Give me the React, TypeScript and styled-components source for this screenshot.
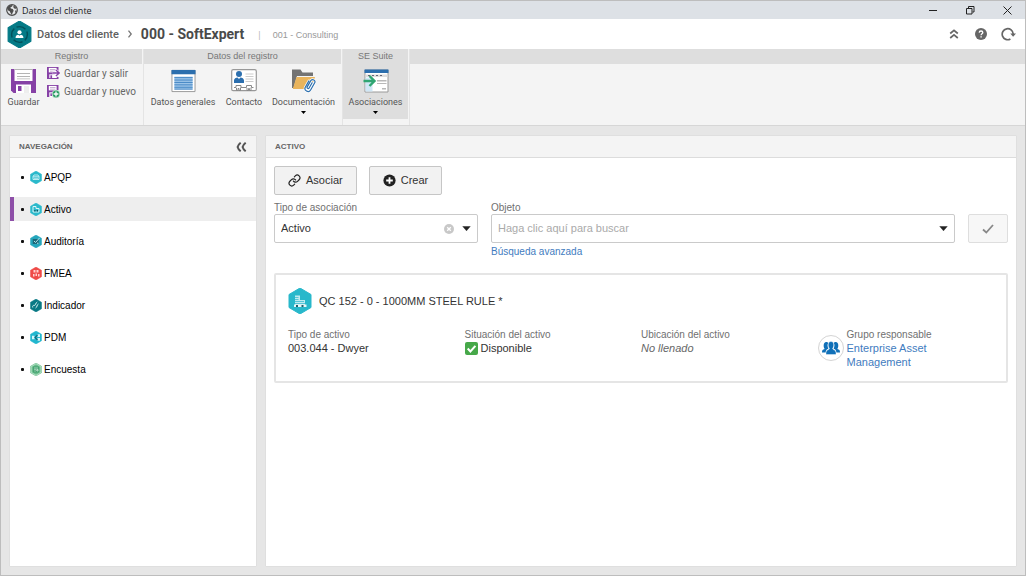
import React from "react";
import styled, { createGlobalStyle, css } from "styled-components";
import { Link } from "lucide-react";

const GlobalStyle = createGlobalStyle`
  *, *::before, *::after { box-sizing: border-box; }
  html, body { margin: 0; }
  body {
    font-family: "Liberation Sans", Arial, sans-serif;
    font-size: 11px;
    line-height: 13px;
    color: #333;
  }
  button, input, select { font: inherit; color: inherit; margin: 0; }
  button { cursor: pointer; }
  svg { display: block; flex: none; }
`;

const Window = styled.div`
  display: flex;
  flex-direction: column;
  min-height: 100vh;
  background: #e6e6e6;
  border: 1px solid #bdbdbd;
`;

const TitleBar = styled.div`
  display: flex;
  align-items: center;
  justify-content: space-between;
  height: 18px;
  padding: 0 8px 0 5px;
  background: #dde1e6;
  font-family: "Open Sans", "Noto Sans", sans-serif;
  font-size: 9px;
  color: #222;
`;

const TitleName = styled.div`
  display: flex;
  align-items: center;
  gap: 4px;
`;

const WindowButtons = styled.div`
  display: flex;
  align-items: center;
  gap: 17px;
`;

const IconButton = styled.button<{ $size?: number }>`
  display: flex;
  align-items: center;
  justify-content: center;
  width: ${(p) => p.$size ?? 20}px;
  height: ${(p) => p.$size ?? 20}px;
  padding: 0;
  border: 0;
  background: none;
  color: #666;
`;

const Header = styled.header`
  display: flex;
  align-items: center;
  justify-content: space-between;
  height: 30px;
  padding: 0 7px 0 6px;
  background: #fff;
`;

const Breadcrumb = styled.nav`
  display: flex;
  align-items: center;
  font-family: Roboto, "Liberation Sans", sans-serif;
`;

const CrumbLink = styled.a`
  margin: 0 8px 0 5px;
  font-weight: 500;
  color: #606060;
  text-decoration: none;
`;

const CrumbTitle = styled.h1`
  margin: 0 14px 0 8px;
  font-size: 14px;
  line-height: 16px;
  font-weight: 700;
  color: #4a4a4a;
`;

const CrumbNote = styled.span`
  padding-top: 3px;
  font-family: "Liberation Sans", Arial, sans-serif;
  font-size: 9px;
  color: #999;
`;

const CrumbBar = styled(CrumbNote)`
  margin-right: 12px;
  color: #bbb;
`;

const HeaderTools = styled.div`
  display: flex;
  align-items: center;
  gap: 7px;
`;

const Ribbon = styled.div`
  display: flex;
  gap: 2px;
  background: #f4f4f4;
  border-bottom: 1px solid #d6d6d6;
`;

const RibbonGroup = styled.section<{ $grow?: boolean }>`
  display: flex;
  flex-direction: column;
  height: 76px;
  ${(p) => p.$grow && "flex: 1;"}
  & + & { box-shadow: -1px 0 0 #e4e4e4; }
`;

const GroupTitle = styled.h2`
  display: flex;
  align-items: center;
  justify-content: center;
  height: 15px;
  margin: 0;
  background: #dedede;
  font-size: 9px;
  font-weight: 400;
  color: #777;
`;

const GroupBody = styled.div`
  display: flex;
  align-items: flex-start;
  font-family: Roboto, "Liberation Sans", sans-serif;
`;

const RibbonStack = styled.div`
  display: flex;
  flex-direction: column;
  width: 96px;
  padding-left: 1px;
`;

const Tool = styled.button<{ $width: number; $active?: boolean }>`
  display: flex;
  flex-direction: column;
  align-items: center;
  width: ${(p) => p.$width}px;
  height: 55px;
  padding: 5px 0 0;
  border: 0;
  background: ${(p) => (p.$active ? "#dedede" : "none")};
  font-size: 9px;
  line-height: 11px;
  white-space: nowrap;
  color: #555;
`;

const ToolLabel = styled.span`
  margin: 4px 0 3px;
`;

const SmallTool = styled.button`
  display: flex;
  align-items: center;
  gap: 4px;
  height: 18px;
  padding: 0;
  border: 0;
  background: none;
  font-size: 10px;
  white-space: nowrap;
  color: #666;
`;

const Workspace = styled.div`
  flex: 1;
  display: flex;
  gap: 8px;
  padding: 9px 8px 8px;
`;

const Panel = styled.section<{ $width?: number }>`
  display: flex;
  flex-direction: column;
  ${(p) => (p.$width ? `flex: none; width: ${p.$width}px;` : "flex: 1; min-width: 0;")}
  background: #fff;
  border: 1px solid #dfdfdf;
  border-radius: 1px;
`;

const PanelHeader = styled.div`
  display: flex;
  align-items: center;
  justify-content: space-between;
  height: 22px;
  padding: 0 5px 0 9px;
  background: #f4f4f4;
  border-bottom: 1px solid #dcdcdc;
`;

const PanelTitle = styled.h2`
  margin: 0;
  font-size: 8px;
  font-weight: 700;
  color: #666;
`;

const NavList = styled.ul`
  display: flex;
  flex-direction: column;
  gap: 8px;
  margin: 0;
  padding: 7px 0;
  list-style: none;
`;

const NavLink = styled.a<{ $active?: boolean }>`
  display: flex;
  align-items: center;
  gap: 2px;
  height: 24px;
  border-left: 4px solid ${(p) => (p.$active ? "#8e4fa8" : "transparent")};
  background: ${(p) => (p.$active ? "#eeeeee" : "none")};
  font-size: 10px;
  color: #000;
  text-decoration: none;
  &::before {
    content: "";
    width: 3px;
    height: 3px;
    margin: 0 4px 0 7px;
    border-radius: 1px;
    background: #111;
  }
`;

const PanelBody = styled.div`
  padding: 8px;
`;

const ButtonRow = styled.div`
  display: flex;
  gap: 12px;
`;

const Button = styled.button`
  display: flex;
  align-items: center;
  gap: 5px;
  height: 29px;
  padding: 0 13px;
  border: 1px solid #c6c6c6;
  border-radius: 2px;
  background: #f2f2f2;
  color: #333;
`;

const FilterRow = styled.div`
  display: flex;
  align-items: flex-start;
  gap: 13px;
  margin-top: 7px;
`;

const Field = styled.div<{ $width?: number }>`
  display: flex;
  flex-direction: column;
  ${(p) => (p.$width ? `flex: none; width: ${p.$width}px;` : "flex: 1; min-width: 0;")}
`;

const label = css`
  font-size: 10px;
  line-height: 12px;
  color: #707070;
`;

const FieldLabel = styled.label`
  ${label}
`;

const Control = styled.div`
  display: flex;
  align-items: center;
  height: 29px;
  border: 1px solid #cacaca;
  border-radius: 2px;
  background: #fff;
`;

const controlText = css`
  flex: 1;
  min-width: 0;
  height: 100%;
  padding: 0 6px 1px;
  border: 0;
  outline: 0;
  background: none;
  color: #333;
`;

const Select = styled.select`
  ${controlText}
  appearance: none;
`;

const Input = styled.input`
  ${controlText}
  &::placeholder { color: #aaa; opacity: 1; }
`;

const ConfirmButton = styled.button`
  display: flex;
  align-items: center;
  justify-content: center;
  width: 40px;
  height: 29px;
  margin-top: 12px;
  padding: 0;
  border: 1px solid #dedede;
  border-radius: 2px;
  background: #f7f7f7;
`;

const AdvancedLink = styled.a`
  align-self: flex-start;
  margin-top: 2px;
  font-size: 10px;
  color: #3f7cc0;
  text-decoration: none;
`;

const Card = styled.article`
  min-height: 109px;
  margin-top: 15px;
  padding: 13px 12px 12px;
  border: 2px solid #e5e5e5;
  border-radius: 2px;
`;

const CardHead = styled.div`
  display: flex;
  align-items: center;
  gap: 7px;
`;

const CardTitle = styled.h3`
  margin: 0;
  font-size: 11px;
  font-weight: 400;
  color: #333;
`;

const Facts = styled.dl`
  display: grid;
  grid-template-columns: repeat(4, 1fr);
  margin: 15px 0 0;
`;

const Fact = styled.div`
  min-width: 0;
`;

const FactLabel = styled.dt`
  ${label}
`;

const FactValue = styled.dd<{ $empty?: boolean }>`
  display: flex;
  align-items: center;
  gap: 3px;
  margin: 0;
  line-height: 14px;
  ${(p) => p.$empty && "font-style: italic; color: #666;"}
  a { color: #3f7cc0; text-decoration: none; }
`;

const GroupFact = styled.div`
  display: flex;
  gap: 3px;
`;

const Avatar = styled.span`
  display: flex;
  align-items: center;
  justify-content: center;
  flex: none;
  width: 26px;
  height: 26px;
  margin-top: 6px;
  border: 1px solid #d4d4d4;
  border-radius: 50%;
`;

const HEX = "M12 0 23 6.5V19.500L12 26 1 19.500V6.500Z";

function Hexagon({ color, width, height, children }: { color: string; width: number; height: number; children?: React.ReactNode }) {
  return (
    <svg width={width} height={height} viewBox="0 0 24 26" aria-hidden="true">
      <path d={HEX} fill={color} stroke={color} strokeLinejoin="round" />
      {children}
    </svg>
  );
}

const Caret = () => (
  <svg width="9" height="5" viewBox="0 0 9 5" aria-hidden="true">
    <path d="M.8.4h7.400L4.500 4.800Z" fill="#222" stroke="#222" strokeWidth=".5" strokeLinejoin="round" />
  </svg>
);

const SmallCaret = () => (
  <svg width="5" height="3" viewBox="0 0 5 3" aria-hidden="true">
    <path d="M0 0h5L2.500 3Z" fill="#000" />
  </svg>
);

const Globe = () => (
  <svg width="12" height="12" viewBox="0 0 12 12" aria-hidden="true">
    <circle cx="6" cy="6" r="5.300" fill="#e4e6e8" stroke="#4d4d4d" strokeWidth="1.200" />
    <path d="M1 4 3.500 1.200 6.500 1l-.3 1.500-1.700.8.3 1.300 2 .4.900 1.700L6.500 9l-.7 2L4.600 9 3.700 7.200 1.800 6.300Z M8 1.400l2.500 2.500-1.300 1L7.800 4l-.6-1.300Z M9 6.500l2 .2L9.500 9.600Z" fill="#4d4d4d" />
  </svg>
);

const AppLogo = () => (
  <Hexagon color="#047a86" width={25} height={27}>
    <circle cx="12" cy="13" r="7.600" fill="none" stroke="#03505a" strokeWidth="1.400" strokeDasharray="9.300 2.600" strokeDashoffset="3" />
    <circle cx="12" cy="10.800" r="2" fill="#fff" />
    <path d="M8.200 16.300c0-2 1.300-3 2.600-3.100L12 14.300l1.200-1.100c1.300.1 2.600 1.100 2.600 3.100Z" fill="#fff" />
  </Hexagon>
);

const SaveIcon = () => (
  <svg width="25" height="24" viewBox="0 0 25 24" aria-hidden="true">
    <path d="M0 0h25v24H2.500L0 21.500Z" fill="#8641a6" />
    <path d="M3.500 0h18v12H3.500Z" fill="#fff" />
    <path d="M3.500 0h18v1h-18ZM6 4h13v1H6Zm0 3h13v1H6Zm0 2.500h13v.7H6Z" fill="#b5b5b5" />
    <path d="M5 15.500h15V24H5Z" fill="#fff" />
    <path d="M7 17h3.500v5H7Z" fill="#8641a6" />
    <path d="M13 17h5v7h-5Z" fill="#eee" />
  </svg>
);

const MiniDisk = () => (
  <>
    <path d="M0 0h11.500v5h-1.300V12H0Z" fill="#8641a6" />
    <path d="M1.800.9h7.800v4.500H1.800Z" fill="#fff" />
    <path d="M3 2h5.500v.8H3Zm0 1.700h5.500v.7H3Z" fill="#b99bc8" />
    <path d="M2.300 7.300h7.500V12H2.300Z" fill="#fff" />
    <path d="M3.400 8.300h1.700v2.700H3.400Z" fill="#8641a6" />
  </>
);

const SaveExitIcon = () => (
  <svg width="13" height="12" viewBox="0 0 13 12" aria-hidden="true">
    <MiniDisk />
    <path d="M5.500 6h5.500M8.700 3.200 12 6 8.700 8.800" fill="none" stroke="#fff" strokeWidth="3" />
    <path d="M5.500 6h6M8.900 3 12.200 6 8.900 9" fill="none" stroke="#8641a6" strokeWidth="1.400" />
    <path d="M10 10h1.500v2H0v-1h10Z" fill="#8641a6" />
  </svg>
);

const SaveNewIcon = () => (
  <svg width="13" height="13" viewBox="0 0 13 13" aria-hidden="true">
    <MiniDisk />
    <circle cx="9" cy="9" r="3.900" fill="#279b62" stroke="#fff" strokeWidth=".6" />
    <path d="M9 6.600v4.800M6.600 9h4.800" stroke="#fff" strokeWidth="1.300" />
  </svg>
);

const FormIcon = () => (
  <svg width="25" height="24" viewBox="0 0 26 24" aria-hidden="true">
    <path d="M1 1h24v22H1Z" fill="#fff" stroke="#999" />
    <path d="M.5.5h25v4.500H.5Z" fill="#2c6fae" />
    <path d="M3.500 7.500h19v13h-19Z" fill="#9cc4e8" />
    <path d="M3.500 8.500h19m-19 2.500h19m-19 2.500h19m-19 2.500h19m-19 2.500h19m-19 2h19" stroke="#4385c4" />
  </svg>
);

const ContactIcon = () => (
  <svg width="26" height="24" viewBox="0 0 26 24" aria-hidden="true">
    <rect x=".7" y=".7" width="24.600" height="21" rx="1.500" fill="#fff" stroke="#999" strokeWidth="1.200" />
    <circle cx="8" cy="5" r="3" fill="#2c6fae" />
    <path d="M3 14v-2.500C3 9.500 5 8.500 6.500 8.500L8 10l1.500-1.500c1.500 0 3.500 1 3.500 3V14Z" fill="#2c6fae" />
    <path d="M14.500 5h8m-8 2.500h8m-8 2.500h8m-8 2.500h8" stroke="#ccc" />
    <path d="M3 18.500h2v-2h5v2h5.500v-2h5v2h2M5.500 19v2.500h1.500v-2h1v2h1.500v-3M16 19v2.500h1.500v-2h1v2H20v-3" fill="none" stroke="#8a8a8a" />
  </svg>
);

const FolderIcon = () => (
  <svg width="26" height="24" viewBox="0 0 26 24" aria-hidden="true">
    <path d="M1 .5h8.500l2 3H22V7H6L2.500 19H1Z" fill="#737373" />
    <path d="M5.500 8H24l-3.500 12H1.800Z" fill="#e9b45c" />
    <g transform="rotate(30 19 16)" fill="none" strokeLinecap="round">
      <path d="M16 13v7a3 3 0 0 0 6 0v-8.500a2.300 2.300 0 0 0-4.500 0v7.500a1.100 1.100 0 0 0 2.200 0v-6" stroke="#fff" strokeWidth="2.600" />
      <path d="M16 13v7a3 3 0 0 0 6 0v-8.500a2.300 2.300 0 0 0-4.500 0v7.500a1.100 1.100 0 0 0 2.200 0v-6" stroke="#2c6fae" strokeWidth="1.200" />
    </g>
  </svg>
);

const AssociationIcon = () => (
  <svg width="26" height="24" viewBox="0 0 26 24" aria-hidden="true">
    <path d="M2 1h23v22H2Z" fill="#fff" stroke="#999" />
    <path d="M1.500.5h24v3.500h-24Z" fill="#2c6fae" />
    <path d="M2.500 5.500h22v2.500h-22Z" fill="#ddd" />
    <path d="M5 6h2v1H5Zm4 0h2v1H9Zm4 0h2v1h-2Zm4 0h2v1h-2Z" fill="#667" />
    <path d="M2.500 8.500h7V22.500h-7Z" fill="#cfe7f6" />
    <path d="M14 11h9.500v1.500H14Zm0 3h9.500v1H14Zm5 5h4v1.500h-4Z" fill="#b8b8b8" />
    <path d="M.5 12h10M6.500 7l5 5-5 5" fill="none" stroke="#2fa572" strokeWidth="2.400" />
  </svg>
);

const CollapseIcon = () => (
  <svg width="12" height="12" viewBox="0 0 12 12" fill="none" stroke="#666" strokeWidth="1.700" aria-hidden="true">
    <path d="M2.200 5.500 6 2.300l3.800 3.200M2.200 10 6 6.800 9.800 10" />
  </svg>
);

const HelpIcon = () => (
  <svg width="12" height="12" viewBox="0 0 12 12" aria-hidden="true">
    <circle cx="6" cy="6" r="6" fill="#666" />
    <path d="M4.200 4.600C4.300 2.400 7.800 2.500 7.800 4.500 7.800 5.800 6.100 5.800 6.100 7.200" fill="none" stroke="#fff" strokeWidth="1.300" />
    <path d="M5.400 8.200h1.400v1.400H5.400Z" fill="#fff" />
  </svg>
);

const RefreshIcon = () => (
  <svg width="15" height="14" viewBox="0 0 15 14" aria-hidden="true">
    <path d="M9.400 12A5.500 5.500 0 1 1 12.200 7" fill="none" stroke="#666" strokeWidth="1.700" />
    <path d="M9.300 6.500H15l-2.900 3.300Z" fill="#666" />
  </svg>
);

const DoubleLeft = () => (
  <svg width="11" height="10" viewBox="0 0 11 10" fill="none" stroke="#555" strokeWidth="2" aria-hidden="true">
    <path d="M4.700.7C3.700 1.500 2 3.500 1.600 5c.4 1.500 2.100 3.500 3.100 4.300M9.700.7C8.700 1.500 7 3.500 6.600 5c.4 1.500 2.100 3.500 3.100 4.300" />
  </svg>
);

const PlusIcon = () => (
  <svg width="13" height="13" viewBox="0 0 13 13" aria-hidden="true">
    <circle cx="6.500" cy="6.500" r="6.100" fill="#222" />
    <path d="M6.500 3.200v6.600M3.200 6.500h6.600" stroke="#fff" strokeWidth="1.800" />
  </svg>
);

const ClearIcon = () => (
  <svg width="10" height="10" viewBox="0 0 10 10" aria-hidden="true">
    <circle cx="5" cy="5" r="5" fill="#c8c8c8" />
    <path d="m3.200 3.200 3.600 3.600m0-3.600L3.200 6.800" stroke="#fff" strokeWidth="1.300" />
  </svg>
);

const CheckBadge = () => (
  <svg width="13" height="13" viewBox="0 0 13 13" aria-hidden="true">
    <rect width="13" height="13" rx="2" fill="#46a849" />
    <path d="m2.700 6.500 2.700 2.900 5-5.600" fill="none" stroke="#fff" strokeWidth="2" />
  </svg>
);

const PeopleIcon = () => (
  <svg width="20" height="16" viewBox="0 0 20 16" fill="#1070b8" aria-hidden="true">
    <path d="M1 12.500c0-2.300.7-3 2.700-3.500C2.300 7.500 2 2 5.200 2c1 0 1.600.4 2 1-.9 1.400-.8 4 .2 5.800-1.900.7-2.700 1.700-2.700 3.700Z" />
    <path d="M19 12.500c0-2.300-.7-3-2.700-3.500C17.700 7.500 18 2 14.800 2c-1 0-1.600.4-2 1 .9 1.400.8 4-.2 5.800 1.900.7 2.700 1.700 2.700 3.700Z" />
    <path d="M10 1.500c3.700 0 3 5.400 1.500 7.300.2 1 3.500.9 3.500 4v1.700H5v-1.700c0-3.100 3.300-3 3.500-4C7 6.900 6.300 1.500 10 1.500Z" stroke="#fff" strokeWidth=".4" />
  </svg>
);

const AssetIcon = () => (
  <Hexagon color="#28b8cb" width={24} height={26}>
    <path d="M7 7.500h5V12h5v5.500H7Z" fill="#bfeaf0" />
    <path d="M7 9.500h3.500m-3.500 2h3.500m-3.500 2h9M7 15.500h10" stroke="#28b8cb" strokeWidth=".7" />
    <path d="M6 16.500h12.500v2.500H6Z" fill="#e6f7f9" />
    <path d="M8 17h2v2H8Zm5.500 0h2v2h-2Z" fill="#23606b" />
  </Hexagon>
);

const navGlyphs: Record<string, React.ReactNode> = {
  car: <path d="M6 17v-6l2-3h8l2 3v6Zm0-5.500h12M8 14.500h8" fill="none" stroke="#d3f3f7" strokeWidth="1.700" />,
  building: (
    <>
      <path d="M6 7h6v4h6v7H6Z" fill="none" stroke="#d9f5f8" strokeWidth="2" />
      <path d="M8.500 14h2.500v3H8.500Zm5 0H16v3h-2.500Z" fill="#134f5c" />
    </>
  ),
  audit: (
    <>
      <path d="M5.500 8h12v10h-12Z" fill="#1c6878" />
      <path d="m8 12 3 3 8-9M14 16.500h3" fill="none" stroke="#bfeaf0" strokeWidth="1.900" />
    </>
  ),
  risk: (
    <path d="M7 6h4v5H7Zm6 0h4v5h-4Zm-7 8h3v5H6Zm5-1h3v5h-3Zm5 1h3v5h-3Z" fill="#ffd1cf" />
  ),
  gauge: <path d="M5.500 17c-1-3 1-5 3-4s3-6 6-7M11 18c4-1 2-7 6-8" fill="none" stroke="#d5eef0" strokeWidth="2" />,
  share: (
    <>
      <path d="M4 9.500h5v7H4Zm11-3h5V12h-5Zm0 7.500h5v5.500h-5Z" fill="#d6f5fa" />
      <path d="m15 8-5 5 5 5" fill="none" stroke="#17677a" strokeWidth="2.300" />
    </>
  ),
  survey: (
    <>
      <path d={HEX} fill="none" stroke="#d9f0e2" strokeWidth="1.500" transform="translate(1.500 1.600) scale(.88)" />
      <path d="M6.500 7h11v12h-11Z" fill="#3d9d6a" />
      <path d="M8 10h8M8.500 13h3m-3 3h3m2-3h2.500v3h-2.500Z" fill="none" stroke="#e9f8ef" strokeWidth="1.300" />
    </>
  ),
};

const navItems = [
  { name: "APQP", color: "#2bb9cb", glyph: "car" },
  { name: "Activo", color: "#2bb9cb", glyph: "building", active: true },
  { name: "Auditoría", color: "#25a6bc", glyph: "audit" },
  { name: "FMEA", color: "#ef4b48", glyph: "risk" },
  { name: "Indicador", color: "#087984", glyph: "gauge" },
  { name: "PDM", color: "#22b7cf", glyph: "share" },
  { name: "Encuesta", color: "#68bd8b", glyph: "survey" },
];

export default function App() {
  return (
    <>
      <GlobalStyle />
      <Window>
        <TitleBar>
          <TitleName>
            <Globe />
            <span>Datos del cliente</span>
          </TitleName>
          <WindowButtons>
            <IconButton aria-label="Minimizar">
              <svg width="9" height="9" viewBox="0 0 9 9"><path d="M0 4.500h8" stroke="#222" /></svg>
            </IconButton>
            <IconButton aria-label="Restaurar">
              <svg width="9" height="9" viewBox="0 0 9 9" fill="none" stroke="#222">
                <path d="M.5 2.500h5.500v5.500H.5ZM2.500 2V.5H8v5.500H6.500" />
              </svg>
            </IconButton>
            <IconButton aria-label="Cerrar">
              <svg width="9" height="9" viewBox="0 0 9 9"><path d="m.5.5 8 8m0-8-8 8" stroke="#222" /></svg>
            </IconButton>
          </WindowButtons>
        </TitleBar>

        <Header>
          <Breadcrumb>
            <AppLogo />
            <CrumbLink href="#cliente">Datos del cliente</CrumbLink>
            <svg width="6" height="8" viewBox="0 0 6 8" aria-hidden="true">
              <path d="m1.500.7 2.700 3.300-2.700 3.300" fill="none" stroke="#777" strokeWidth="1.300" />
            </svg>
            <CrumbTitle>000 - SoftExpert</CrumbTitle>
            <CrumbBar>|</CrumbBar>
            <CrumbNote>001 - Consulting</CrumbNote>
          </Breadcrumb>
          <HeaderTools>
            <IconButton aria-label="Contraer"><CollapseIcon /></IconButton>
            <IconButton aria-label="Ayuda"><HelpIcon /></IconButton>
            <IconButton aria-label="Actualizar"><RefreshIcon /></IconButton>
          </HeaderTools>
        </Header>

        <Ribbon>
          <RibbonGroup>
            <GroupTitle>Registro</GroupTitle>
            <GroupBody>
              <Tool $width={45}>
                <SaveIcon />
                <ToolLabel>Guardar</ToolLabel>
              </Tool>
              <RibbonStack>
                <SmallTool><SaveExitIcon />Guardar y salir</SmallTool>
                <SmallTool><SaveNewIcon />Guardar y nuevo</SmallTool>
              </RibbonStack>
            </GroupBody>
          </RibbonGroup>
          <RibbonGroup>
            <GroupTitle>Datos del registro</GroupTitle>
            <GroupBody>
              <Tool $width={78}><FormIcon /><ToolLabel>Datos generales</ToolLabel></Tool>
              <Tool $width={44}><ContactIcon /><ToolLabel>Contacto</ToolLabel></Tool>
              <Tool $width={75}><FolderIcon /><ToolLabel>Documentación</ToolLabel><SmallCaret /></Tool>
            </GroupBody>
          </RibbonGroup>
          <RibbonGroup>
            <GroupTitle>SE Suite</GroupTitle>
            <GroupBody>
              <Tool $width={65} $active><AssociationIcon /><ToolLabel>Asociaciones</ToolLabel><SmallCaret /></Tool>
            </GroupBody>
          </RibbonGroup>
          <RibbonGroup $grow>
            <GroupTitle />
          </RibbonGroup>
        </Ribbon>

        <Workspace>
          <Panel $width={248}>
            <PanelHeader>
              <PanelTitle>NAVEGACIÓN</PanelTitle>
              <IconButton aria-label="Ocultar navegación"><DoubleLeft /></IconButton>
            </PanelHeader>
            <NavList>
              {navItems.map((item) => (
                <li key={item.name}>
                  <NavLink href="#" $active={item.active}>
                    <Hexagon color={item.color} width={12} height={13}>{navGlyphs[item.glyph]}</Hexagon>
                    {item.name}
                  </NavLink>
                </li>
              ))}
            </NavList>
          </Panel>

          <Panel>
            <PanelHeader>
              <PanelTitle>ACTIVO</PanelTitle>
            </PanelHeader>
            <PanelBody>
              <ButtonRow>
                <Button><Link size={13} strokeWidth={2.2} color="#222" />Asociar</Button>
                <Button><PlusIcon />Crear</Button>
              </ButtonRow>
              <FilterRow>
                <Field $width={204}>
                  <FieldLabel htmlFor="tipo">Tipo de asociación</FieldLabel>
                  <Control>
                    <Select id="tipo" defaultValue="Activo">
                      <option>Activo</option>
                    </Select>
                    <IconButton $size={12} aria-label="Limpiar"><ClearIcon /></IconButton>
                    <IconButton $size={22} aria-label="Abrir tipos"><Caret /></IconButton>
                  </Control>
                </Field>
                <Field>
                  <FieldLabel htmlFor="objeto">Objeto</FieldLabel>
                  <Control>
                    <Input id="objeto" type="text" placeholder="Haga clic aquí para buscar" />
                    <IconButton $size={22} aria-label="Abrir objetos"><Caret /></IconButton>
                  </Control>
                  <AdvancedLink href="#busqueda">Búsqueda avanzada</AdvancedLink>
                </Field>
                <ConfirmButton aria-label="Confirmar">
                  <svg width="12" height="10" viewBox="0 0 12 10" aria-hidden="true">
                    <path d="m1 5.500 3.300 3L11 1" fill="none" stroke="#888" strokeWidth="1.800" />
                  </svg>
                </ConfirmButton>
              </FilterRow>

              <Card>
                <CardHead>
                  <AssetIcon />
                  <CardTitle>QC 152 - 0 - 1000MM STEEL RULE *</CardTitle>
                </CardHead>
                <Facts>
                  <Fact>
                    <FactLabel>Tipo de activo</FactLabel>
                    <FactValue>003.044 - Dwyer</FactValue>
                  </Fact>
                  <Fact>
                    <FactLabel>Situación del activo</FactLabel>
                    <FactValue><CheckBadge />Disponible</FactValue>
                  </Fact>
                  <Fact>
                    <FactLabel>Ubicación del activo</FactLabel>
                    <FactValue $empty>No llenado</FactValue>
                  </Fact>
                  <GroupFact>
                    <Avatar><PeopleIcon /></Avatar>
                    <div>
                      <FactLabel>Grupo responsable</FactLabel>
                      <FactValue><a href="#grupo">Enterprise Asset<br />Management</a></FactValue>
                    </div>
                  </GroupFact>
                </Facts>
              </Card>
            </PanelBody>
          </Panel>
        </Workspace>
      </Window>
    </>
  );
}
